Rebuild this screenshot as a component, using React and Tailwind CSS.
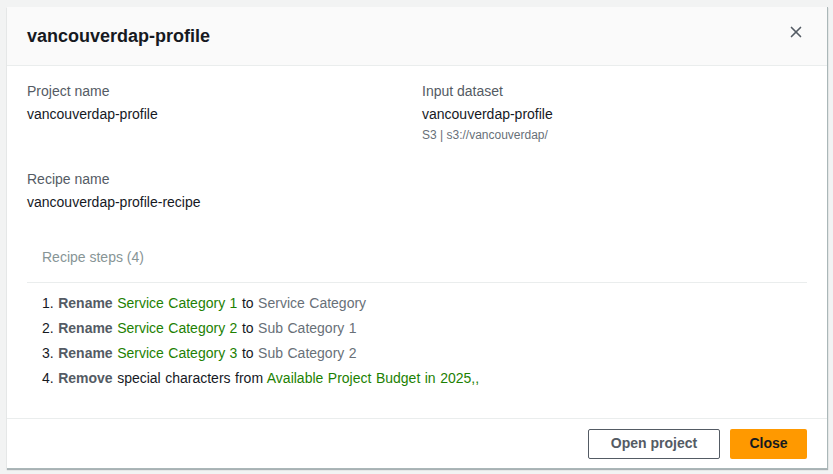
import { X } from "lucide-react";

const steps = [
  { action: "Rename", from: "Service Category 1", mid: "to", to: "Service Category" },
  { action: "Rename", from: "Service Category 2", mid: "to", to: "Sub Category 1" },
  { action: "Rename", from: "Service Category 3", mid: "to", to: "Sub Category 2" },
];

const Field = ({ label, value, sub }) => (
  <div className="flex flex-col">
    <span className="text-[14px] leading-[22px] text-[#545b64]">{label}</span>
    <span className="text-[14px] leading-[22px] text-[#16191f] mt-[1px]">{value}</span>
    {sub && <span className="text-[12px] leading-[16px] text-[#687078] mt-[2px]">{sub}</span>}
  </div>
);

const App = () => {
  return (
    <div
      className="w-full h-screen bg-[#f2f3f3] pt-[7px] pl-[7px] overflow-hidden"
      style={{ fontFamily: "'Liberation Sans', Arial, sans-serif" }}
    >
      <div className="w-[821px] h-[462px] bg-white flex flex-col border-r border-b border-[#aab7b8] shadow-[0_1px_1px_rgba(0,28,36,0.3)]">
        {/* header */}
        <div className="h-[59px] shrink-0 bg-[#fafafa] border-b border-[#eaeded] flex items-center justify-between pl-5 pr-[22px]">
          <h2 className="text-[18px] font-bold text-[#16191f] leading-[24px]">vancouverdap-profile</h2>
          <X className="w-[18px] h-[18px] text-[#545b64] mb-[8px]" strokeWidth={2.2} />
        </div>

        {/* body */}
        <div className="flex-1 px-5 pt-[14px]">
          <div className="grid grid-cols-2 gap-x-[10px]">
            <Field label="Project name" value="vancouverdap-profile" />
            <Field label="Input dataset" value="vancouverdap-profile" sub="S3 | s3://vancouverdap/" />
          </div>
          <div className="mt-[25px]">
            <Field label="Recipe name" value="vancouverdap-profile-recipe" />
          </div>

          <div className="mt-[32px]">
            <div className="px-[15px] pb-[13px] border-b border-[#eaeded]">
              <span className="text-[14px] leading-[22px] text-[#879596]">Recipe steps (4)</span>
            </div>
            <ol className="px-[15px] pt-[8px] text-[14px] leading-[25px] text-[#16191f] [word-spacing:0.6px]">
              {steps.map((s, i) => (
                <li key={i}>
                  {i + 1}. <span className="font-bold text-[#545b64]">{s.action}</span>{" "}
                  <span className="text-[#1d8102]">{s.from}</span> {s.mid}{" "}
                  <span className="text-[#687078]">{s.to}</span>
                </li>
              ))}
              <li>
                4. <span className="font-bold text-[#545b64]">Remove</span> special characters from{" "}
                <span className="text-[#1d8102]">Available Project Budget in 2025,,</span>
              </li>
            </ol>
          </div>
        </div>

        {/* footer */}
        <div className="h-[50px] shrink-0 border-t border-[#eaeded] flex items-center justify-end gap-[10px] pr-5">
          <button className="h-[30px] w-[132px] border border-[#545b64] rounded-[2px] text-[14px] font-bold text-[#545b64] bg-white">
            Open project
          </button>
          <button className="h-[30px] w-[77px] rounded-[2px] text-[14px] font-bold text-[#16191f] bg-[#ff9900]">
            Close
          </button>
        </div>
      </div>
    </div>
  );
};

export default App;
